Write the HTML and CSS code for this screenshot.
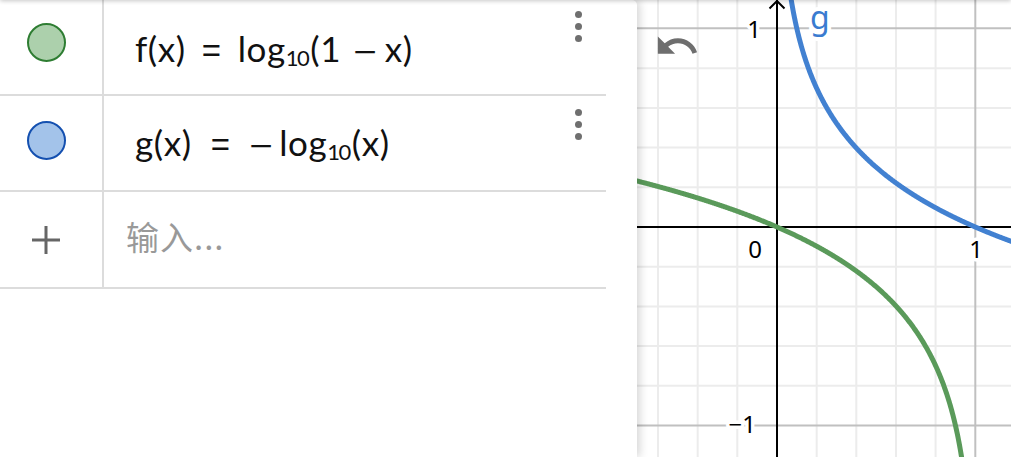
FILE: index.html
```html
<!DOCTYPE html>
<html lang="zh">
<head>
<meta charset="utf-8">
<title>Graph</title>
<link rel="stylesheet" href="styles.css">
</head>
<body>
<div class="app">
  <aside class="algebra">
    <div class="list">
      <div class="row">
        <div class="marble-cell"><span class="marble marble-green"></span></div>
        <div class="expr-cell">
          <div class="math math-f">f(x)<span class="eq eq-f">=</span>log<sub>10</sub>(1<span class="minus">−</span>x)</div>
          <div class="more"><i></i><i></i><i></i></div>
        </div>
      </div>
      <div class="row row-second">
        <div class="marble-cell"><span class="marble marble-blue"></span></div>
        <div class="expr-cell">
          <div class="math math-g">g(x)<span class="eq eq-g">=</span><span class="neg">−</span>log<sub>10</sub>(x)</div>
          <div class="more"><i></i><i></i><i></i></div>
        </div>
      </div>
      <div class="row row-input">
        <div class="marble-cell marble-cell-plus">
          <svg class="plus" viewBox="0 0 28 28" width="28" height="28"><rect x="12.5" y="0" width="3" height="28"/><rect x="0" y="12.5" width="28" height="3"/></svg>
        </div>
        <div class="expr-cell input-cell">
          <span class="placeholder">输入...</span>
        </div>
      </div>
    </div>
  </aside>
  <main class="graphics">
    <svg class="plot" viewBox="637 0 374 457" width="374" height="457">
      <g class="minor">
        <line x1="658" y1="0" x2="658" y2="457"/>
        <line x1="697.7" y1="0" x2="697.7" y2="457"/>
        <line x1="737.3" y1="0" x2="737.3" y2="457"/>
        <line x1="816.7" y1="0" x2="816.7" y2="457"/>
        <line x1="856.3" y1="0" x2="856.3" y2="457"/>
        <line x1="896" y1="0" x2="896" y2="457"/>
        <line x1="935.6" y1="0" x2="935.6" y2="457"/>
        <line x1="637" y1="68.2" x2="1011" y2="68.2"/>
        <line x1="637" y1="107.9" x2="1011" y2="107.9"/>
        <line x1="637" y1="147.6" x2="1011" y2="147.6"/>
        <line x1="637" y1="187.3" x2="1011" y2="187.3"/>
        <line x1="637" y1="266.7" x2="1011" y2="266.7"/>
        <line x1="637" y1="306.4" x2="1011" y2="306.4"/>
        <line x1="637" y1="346.1" x2="1011" y2="346.1"/>
        <line x1="637" y1="385.8" x2="1011" y2="385.8"/>
      </g>
      <g class="major">
        <line x1="975.3" y1="0" x2="975.3" y2="457"/>
        <line x1="637" y1="28.3" x2="1011" y2="28.3"/>
        <line x1="637" y1="425.5" x2="1011" y2="425.5"/>
      </g>
      <g class="axes">
        <line x1="637" y1="227" x2="1011" y2="227"/>
        <line x1="777" y1="0" x2="777" y2="457"/>
        <polyline points="769.5,8.5 777,1 784.5,8.5"/>
      </g>
      <g class="labels">
        <text x="761" y="38">1</text>
        <text x="762" y="258">0</text>
        <text x="976" y="258" text-anchor="middle">1</text>
        <text x="756" y="433">−1</text>
      </g>
      <path id="curve-f" class="curve curve-f" d=""/>
      <path id="curve-g" class="curve curve-g" d=""/>
      <text class="curve-label" x="810" y="29">g</text>
    </svg>
    <svg class="undo" viewBox="0 0 24 24" width="46" height="46"><path d="M12.5 8c-2.65 0-5.05.99-6.9 2.6L2 7v9h9l-3.62-3.62c1.39-1.16 3.16-1.88 5.12-1.88 3.54 0 6.55 2.31 7.6 5.5l2.37-.78C21.08 11.03 17.15 8 12.5 8z"/></svg>
  </main>
  <div class="topshade"></div>
</div>
<script src="script.js"></script>
</body>
</html>
```
FILE: styles.css
```css
* { box-sizing: border-box; }
html, body { margin: 0; padding: 0; background: #fff; }
body { width: 1011px; height: 457px; overflow: hidden; font-family: "Lato", "Noto Sans", sans-serif; }

.app { display: flex; width: 1011px; height: 457px; position: relative; overflow: hidden; }

.algebra {
  width: 637px;
  flex: 0 0 637px;
  height: 457px;
  background: #fff;
  border-top-right-radius: 5px;
  box-shadow: 3px 0 8px rgba(0,0,0,0.16);
  position: relative;
  z-index: 2;
}
.list { width: 606px; }
.row { display: flex; height: 96px; border-bottom: 2px solid #dcdcdc; }
.row-input { height: 97px; }
.marble-cell {
  width: 104px; flex: 0 0 104px;
  border-right: 2px solid #dcdcdc;
  display: flex; justify-content: center; align-items: flex-start;
  padding-top: 23px; padding-right: 10px;
}
.row-second .marble-cell { padding-top: 25px; }
.marble { display: block; width: 39px; height: 39px; border-radius: 50%; border: 2px solid; }
.marble-green { background: #acd0ac; border-color: #2e7d32; }
.marble-blue { background: #a3c3ea; border-color: #1450b0; }
.marble-cell-plus { align-items: center; padding-top: 0; padding-right: 11px; }
.plus { fill: #666; display: block; }

.expr-cell { flex: 1; display: flex; justify-content: space-between; align-items: flex-start; padding-left: 31px; }
.math { font-size: 35px; line-height: 40px; color: #111; padding-top: 28px; white-space: nowrap; letter-spacing: 0.6px; }
.row-second .math { padding-top: 26px; }
.math sub { font-size: 22px; line-height: 0; vertical-align: -4px; letter-spacing: -1.5px; margin-right: 2px; }
.eq { display: inline-block; margin: 0 16px; font-family: "Liberation Sans", sans-serif; font-size: 33px; }
.eq-g { margin: 0 18px 0 19px; }
.minus, .neg { display: inline-block; font-family: "DejaVu Sans", sans-serif; font-size: 25px; transform: scaleX(1.25) translateY(-2px); }
.minus { margin: 0 8px 0 14px; }
.neg { margin: 0 7px 0 2px; }

.more { display: flex; flex-direction: column; gap: 5px; margin-top: 10.5px; margin-right: 24px; }
.row-second .more { margin-top: 12.5px; }
.more i { display: block; width: 7px; height: 7px; border-radius: 50%; background: #6f6f6f; }

.input-cell { align-items: center; padding-left: 22px; }
.placeholder { font-family: "Noto Sans CJK SC", sans-serif; font-size: 33px; color: #999; margin-top: -8px; letter-spacing: 1px; }

.graphics { flex: 1; position: relative; height: 457px; background: #fff; }
.plot { display: block; }
.minor line { stroke: #ececec; stroke-width: 2; }
.major line { stroke: #c0c0c0; stroke-width: 2; }
.axes line, .axes polyline { stroke: #000; stroke-width: 2; fill: none; }
.labels text { font-family: "Noto Sans", sans-serif; font-size: 24px; fill: #000; text-anchor: end; stroke: #fff; stroke-width: 7px; paint-order: stroke; stroke-linejoin: round; }
.labels text[text-anchor="middle"] { text-anchor: middle; }
.curve { fill: none; stroke-width: 5; stroke-linejoin: round; stroke-linecap: round; }
.curve-f { stroke: #5a9a5a; }
.curve-g { stroke: #4281d1; }
.curve-label { font-family: "Noto Sans", sans-serif; font-size: 32px; fill: #3a7bd0; stroke: #fff; stroke-width: 8px; paint-order: stroke; }

.undo { position: absolute; left: 17px; top: 23px; fill: #6e6e6e; }

.topshade { position: absolute; left: 0; right: 0; top: -6px; height: 6px; box-shadow: 0 1px 4px rgba(0,0,0,0.22); z-index: 3; }
```
FILE: script.js
```js
(function () {
  var X0 = 777, Y0 = 227, UX = 198.3, UY = 198.5;
  function build(f, a, b, n) {
    var d = '';
    for (var i = 0; i <= n; i++) {
      var x = a + (b - a) * i / n;
      var y = f(x);
      d += (i ? 'L' : 'M') + (X0 + UX * x).toFixed(2) + ' ' + (Y0 - UY * y).toFixed(2);
    }
    return d;
  }
  var log10 = function (v) { return Math.log(v) / Math.LN10; };
  document.getElementById('curve-f').setAttribute('d', build(function (x) { return log10(1 - x); }, -0.75, 0.935, 600));
  document.getElementById('curve-g').setAttribute('d', build(function (x) { return -log10(x); }, 0.066, 1.25, 800));
})();
```
